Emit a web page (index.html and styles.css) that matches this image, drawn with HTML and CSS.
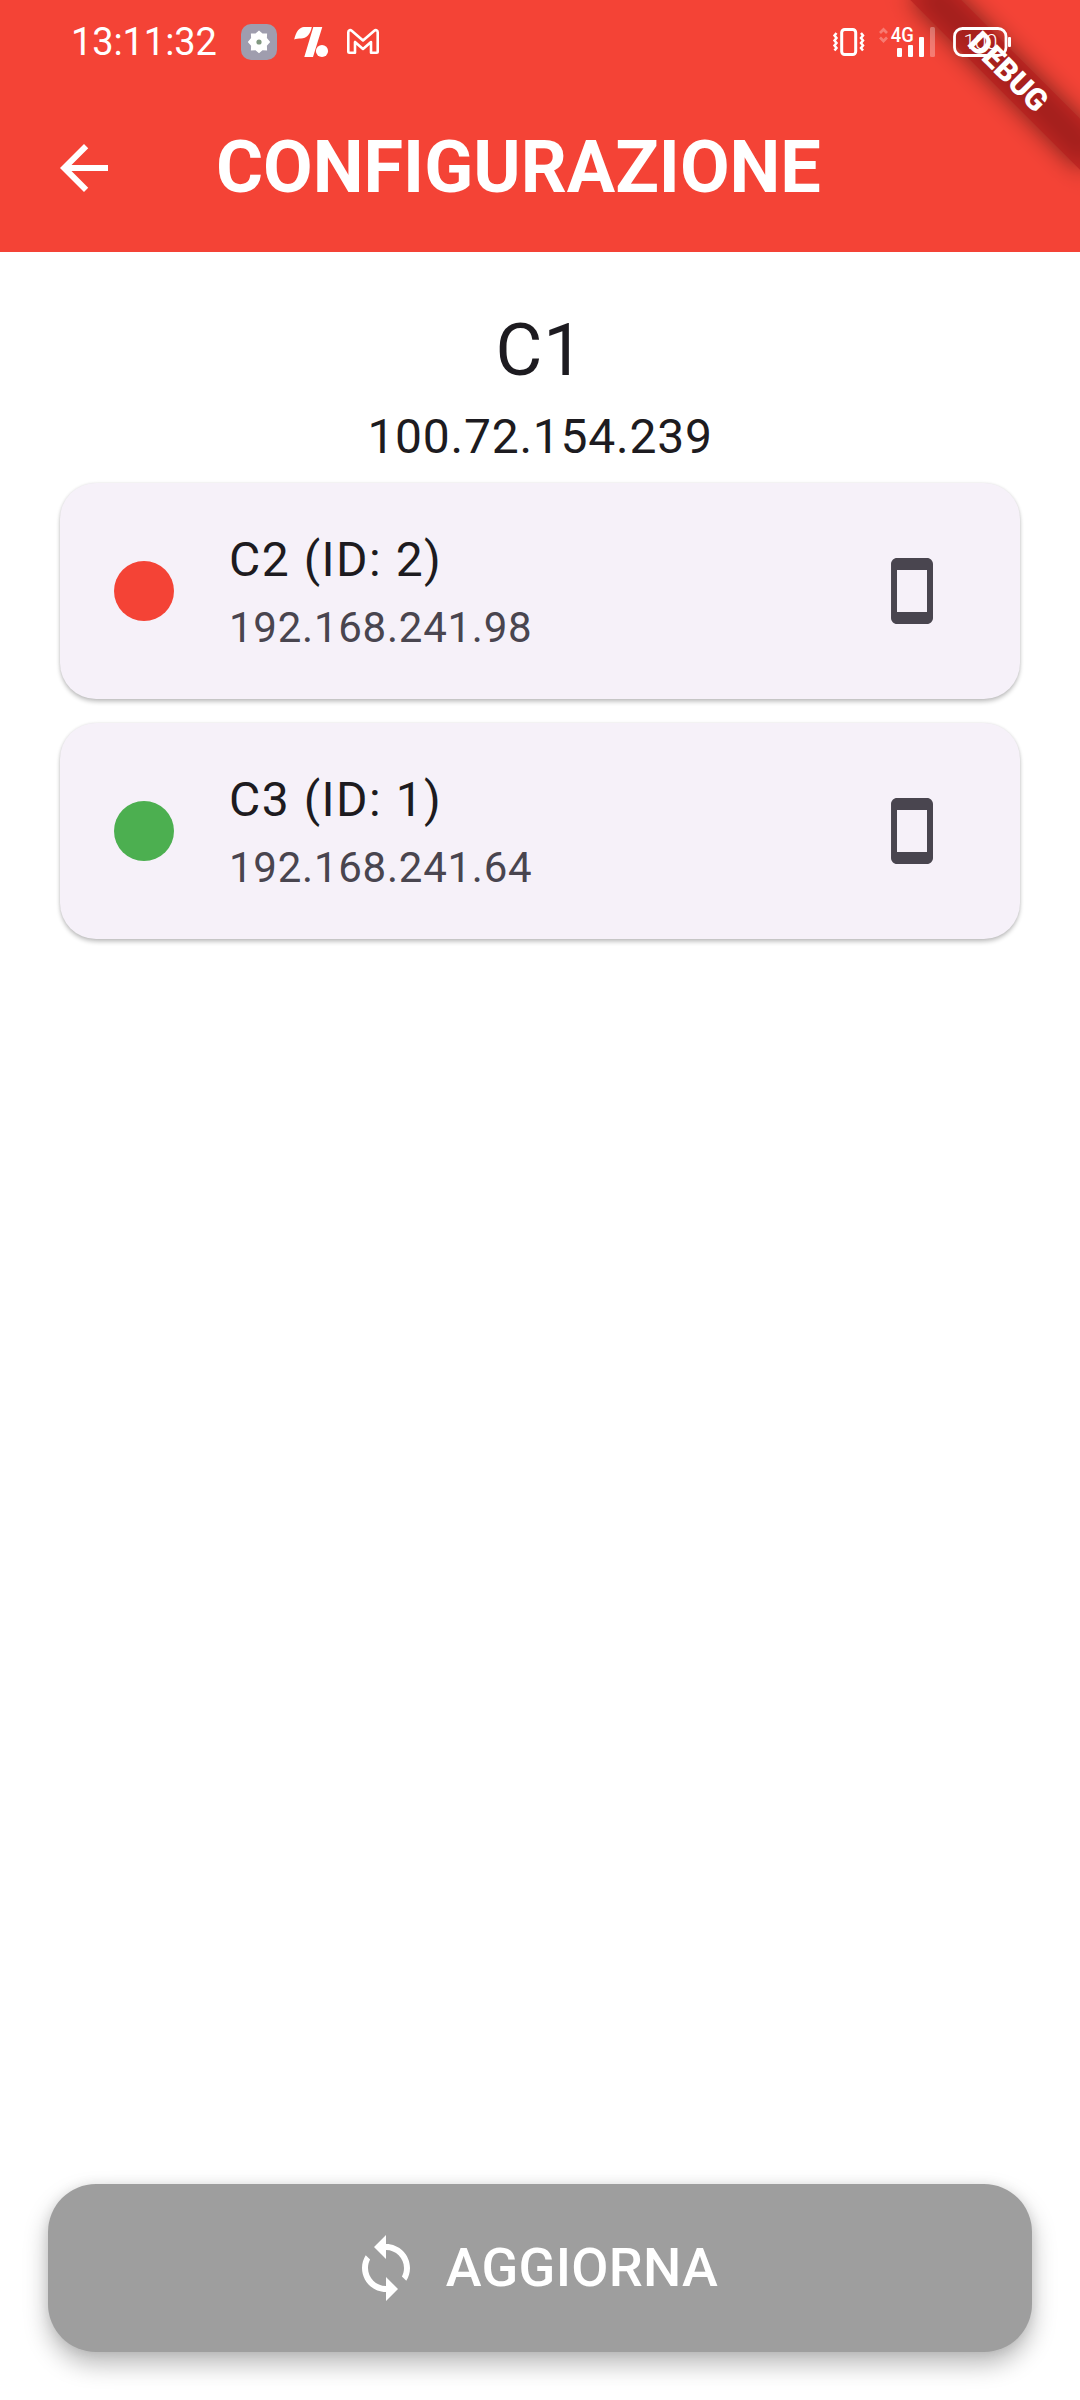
FILE: index.html
```html
<!DOCTYPE html>
<html lang="it">
<head>
<meta charset="utf-8">
<title>Configurazione</title>
<link rel="stylesheet" href="styles.css">
</head>
<body>
<div class="screen">
  <header class="header">
    <div class="debug-clip">
      <div class="debug-shadow"></div>
      <div class="debug-band">DEBUG</div>
    </div>
    <div class="status-bar">
      <span class="clock">13:11:32</span>
      <div class="notifications">
        <svg width="36" height="36" viewBox="0 0 36 36">
          <rect width="36" height="36" rx="10" fill="#9f9dae"/>
          <path d="M18 6.500l3.500 3.100 4.600-.2-.2 4.600 3.300 4-3.300 3.800.2 4.600-4.600-.2-3.500 3.100-3.500-3.100-4.600.2.200-4.600L6.800 18l3.300-4-.2-4.600 4.600.2z" fill="#fff"/>
          <circle cx="18" cy="18" r="2.600" fill="#819880"/>
        </svg>
        <svg width="36" height="36" viewBox="0 0 36 36" fill="#fff">
          <path d="M1.200 15.500C3 7.500 6.500 3.200 11 3h7.800C17.500 10 13.500 14.500 8 14.500c-2.500 0-5 .2-6.800 1zM20.300 3h9L20 33h-8.700z"/>
          <circle cx="29" cy="27" r="6.100"/>
        </svg>
        <svg width="36" height="36" viewBox="0 0 36 36" fill="none" stroke="#fff" stroke-width="2.600" stroke-linejoin="round">
          <path d="M3.300 8.200c0-2.100 2.100-2.600 3.400-1.500L18 16.500l11.300-9.800c1.300-1.100 3.400-.6 3.400 1.500v19.300c0 .7-.5 1.200-1.200 1.200H26V18l-8 7-8-7v10.700H4.500c-.7 0-1.200-.5-1.200-1.200z"/>
        </svg>
      </div>
      <div class="system-icons">
        <svg width="34" height="36" viewBox="0 0 34 36" fill="none" stroke="#fff">
          <rect x="9.700" y="5.500" width="14" height="25" rx="3" stroke-width="3"/>
          <path d="M4.500 9l-2 2.500 2 2.500-2 2.500 2 2.500-2 2.500 2 2.500-2 2.500M29 9l2 2.500-2 2.500 2 2.500-2 2.500 2 2.500-2 2.500 2 2.500" stroke-width="2.500"/>
        </svg>
        <svg class="signal" width="58" height="36" viewBox="0 0 58 36" fill="#fff">
          <path d="M2 9l3.500-3.500L9 9M2 13.500L5.500 17 9 13.500" fill="none" stroke="#fff" stroke-opacity=".3" stroke-width="2.700"/>
          <text x="12.800" y="17.500" textLength="23" lengthAdjust="spacingAndGlyphs">4G</text>
          <rect x="19" y="24" width="5" height="9" rx="1"/>
          <rect x="30" y="21" width="5" height="12" rx="1"/>
          <rect x="41" y="13" width="5" height="20" rx="1"/>
          <rect x="52" y="3" width="5" height="30" rx="1.500" fill-opacity=".3"/>
        </svg>
        <svg class="battery" width="60" height="36" viewBox="0 0 60 36" fill="#fff">
          <rect x="2.500" y="4.500" width="51.500" height="27" rx="8" fill="none" stroke="#fff" stroke-width="2.800"/>
          <rect x="56" y="13" width="3" height="10" rx="1"/>
          <text x="11.500" y="25" textLength="34">100</text>
        </svg>
      </div>
    </div>
    <div class="app-bar">
      <svg class="icon" viewBox="0 0 24 24"><path d="M20 11H7.830l5.590-5.590L12 4l-8 8 8 8 1.410-1.410L7.830 13H20v-2z"/></svg>
      <h1 class="title">CONFIGURAZIONE</h1>
    </div>
  </header>
  <main class="content">
    <p class="device-name">C1</p>
    <p class="device-ip">100.72.154.239</p>
    <ul class="list">
      <li class="card">
        <span class="dot dot-offline"></span>
        <div class="card-text">
          <span class="card-title">C2 (ID: 2)</span>
          <span class="card-ip">192.168.241.98</span>
        </div>
        <svg class="icon" viewBox="0 0 24 24"><path d="M17 1.010L7 1c-1.100 0-1.990.9-1.990 2v18c0 1.100.89 2 1.990 2h10c1.100 0 2-.9 2-2V3c0-1.100-.9-1.990-2-1.990zM17 19H7V5h10v14z"/></svg>
      </li>
      <li class="card">
        <span class="dot dot-online"></span>
        <div class="card-text">
          <span class="card-title">C3 (ID: 1)</span>
          <span class="card-ip">192.168.241.64</span>
        </div>
        <svg class="icon" viewBox="0 0 24 24"><path d="M17 1.010L7 1c-1.100 0-1.990.9-1.990 2v18c0 1.100.89 2 1.990 2h10c1.100 0 2-.9 2-2V3c0-1.100-.9-1.990-2-1.990zM17 19H7V5h10v14z"/></svg>
      </li>
    </ul>
  </main>
  <button class="refresh">
    <svg class="icon" viewBox="0 0 24 24"><path d="M12 4V1L8 5l4 4V6c3.310 0 6 2.690 6 6 0 1.010-.25 1.970-.7 2.800l1.460 1.460C19.540 15.030 20 13.570 20 12c0-4.420-3.580-8-8-8zm0 14c-3.310 0-6-2.690-6-6 0-1.010.25-1.970.7-2.800L5.240 7.740C4.460 8.970 4 10.430 4 12c0 4.420 3.580 8 8 8v3l4-4-4-4v3z"/></svg>
    <span class="refresh-label">AGGIORNA</span>
  </button>
</div>
</body>
</html>
```
FILE: styles.css
```css
* {
  box-sizing: border-box;
}

body {
  margin: 0;
  background: #fff;
  font-family: Roboto, sans-serif;
  color: #1d1b20;
}

.screen {
  display: flex;
  flex-direction: column;
  height: 2400px;
}

.icon {
  width: 72px;
  height: 72px;
  flex: none;
  fill: currentColor;
}

.header {
  position: relative;
  height: 252px;
  background: #f44336;
  color: #fff;
}

.debug-clip {
  position: absolute;
  top: 0;
  right: 0;
  width: 252px;
  height: 252px;
  overflow: hidden;
}

.debug-shadow,
.debug-band {
  position: absolute;
  top: 84px;
  left: 132px;
  width: 240px;
  height: 36px;
  transform-origin: 120px -84px;
  transform: rotate(45deg);
}

.debug-shadow {
  background: rgba(0, 0, 0, 0.5);
  filter: blur(12px);
}

.debug-band {
  background: rgba(183, 28, 28, 0.627);
  font-size: 30.6px;
  font-weight: 900;
  line-height: 36px;
  text-align: center;
}

.status-bar {
  position: relative;
  display: flex;
  align-items: center;
  height: 84px;
  padding: 0 68px 0 71px;
}

.clock {
  width: 170px;
  font-size: 38px;
  font-weight: 400;
  letter-spacing: -0.1px;
  white-space: nowrap;
}

.notifications {
  display: flex;
  gap: 16px;
}

.system-icons {
  display: flex;
  margin-left: auto;
}

.signal {
  margin: 0 16px 0 12px;
  font-size: 21px;
  font-weight: 500;
}

.battery {
  font-size: 21px;
  font-weight: 300;
}

.app-bar {
  display: flex;
  align-items: center;
  gap: 96px;
  height: 168px;
  padding-left: 48px;
}

.title {
  margin: 0;
  font-size: 72px;
  font-weight: 700;
  line-height: 84px;
}

.content {
  flex: 1;
  padding: 49px 60px 0;
}

.device-name,
.device-ip {
  margin: 0;
  text-align: center;
}

.device-name {
  font-size: 72px;
  line-height: 100px;
  letter-spacing: 0.75px;
}

.device-ip {
  font-size: 48px;
  line-height: 72px;
  letter-spacing: 0.75px;
}

.list {
  display: flex;
  flex-direction: column;
  gap: 24px;
  margin: 10px 0 0;
  padding: 0;
  list-style: none;
}

.card {
  display: flex;
  align-items: center;
  height: 216px;
  padding: 0 72px 0 54px;
  border-radius: 36px;
  background: #f6f1f9;
  box-shadow: 0 3px 4px rgba(0, 0, 0, 0.22), 0 0 3px rgba(0, 0, 0, 0.1);
  color: #49454f;
}

.dot {
  width: 60px;
  height: 60px;
  border-radius: 50%;
}

.dot-offline {
  background: #f44336;
}

.dot-online {
  background: #4caf50;
}

.card-text {
  display: flex;
  flex: 1;
  flex-direction: column;
  gap: 2px;
  padding-left: 55px;
}

.card-title {
  font-size: 48px;
  line-height: 72px;
  letter-spacing: 1.5px;
  color: #1d1b20;
}

.card-ip {
  font-size: 42px;
  line-height: 60px;
  letter-spacing: 0.75px;
}

.refresh {
  display: flex;
  align-items: center;
  justify-content: center;
  gap: 24px;
  height: 168px;
  margin: 0 48px 48px;
  padding: 0 12px 0 0;
  border: 0;
  border-radius: 48px;
  background: #9e9e9e;
  box-shadow: 0 12px 24px rgba(0, 0, 0, 0.28), 0 0 12px rgba(0, 0, 0, 0.08);
  color: #fff;
  font-family: inherit;
}

.refresh-label {
  padding-bottom: 2px;
  font-size: 54px;
  font-weight: 500;
  letter-spacing: 0.3px;
}
```
